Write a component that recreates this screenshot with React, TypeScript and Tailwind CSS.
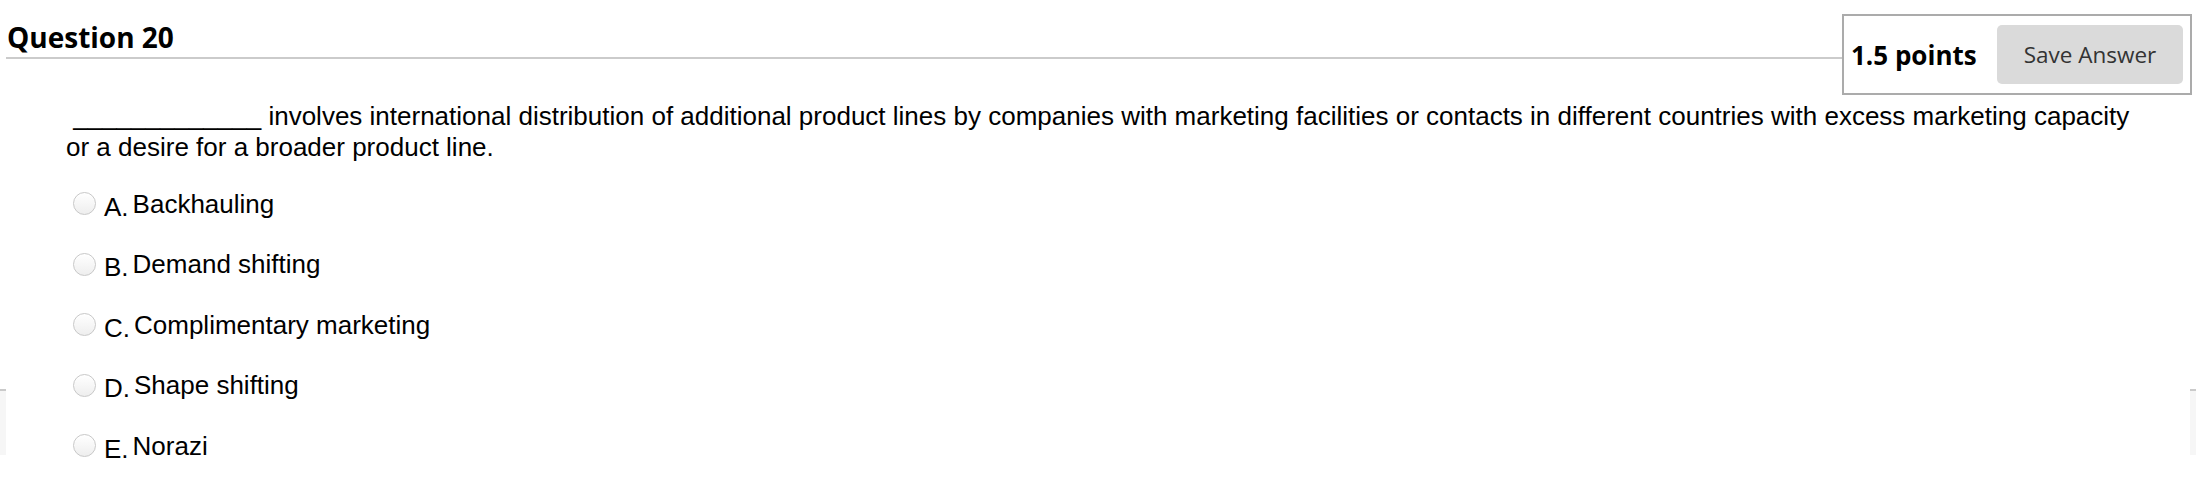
import React from 'react';

const options = [
  { key: 'A.', text: 'Backhauling' },
  { key: 'B.', text: 'Demand shifting' },
  { key: 'C.', text: 'Complimentary marketing' },
  { key: 'D.', text: 'Shape shifting' },
  { key: 'E.', text: 'Norazi' },
];

function Radio() {
  return (
    <span className="block h-[23px] w-[23px] shrink-0 rounded-full border border-[#c8c8c8] bg-gradient-to-b from-white to-[#eeeeee] shadow-[inset_0_1px_1px_rgba(255,255,255,0.9)]" />
  );
}

export default function App() {
  return (
    <div className="relative h-[482px] w-[2196px] overflow-hidden bg-white">
      {/* panel edges peeking out behind the question */}
      <div className="absolute left-0 top-[389px] h-[66px] w-[6px] border-t-2 border-[#cacaca] bg-[#f6f6f6]" />
      <div className="absolute right-0 top-[389px] h-[66px] w-[6px] border-t-2 border-[#cacaca] bg-[#f6f6f6]" />

      {/* Header */}
      <div className="relative flex items-start pl-[6px] pr-[4px] pt-[14px]">
        <div className="h-[45px] flex-1 border-b-2 border-[#cbcbcb]">
          <h2 className="mt-[4px] pl-[1px] font-['Open_Sans',sans-serif] text-[28px] font-bold leading-[38px] text-black">
            Question 20
          </h2>
        </div>
        <div className="flex h-[81px] w-[350px] items-center border-2 border-[#ababab] bg-white pl-[7px] pr-[7px]">
          <span className="font-['Open_Sans',sans-serif] text-[26px] font-bold leading-none text-black">
            1.5 points
          </span>
          <button className="ml-auto flex h-[59px] w-[186px] items-center justify-center rounded-[5px] bg-[#dadada] font-['Open_Sans',sans-serif] text-[22.5px] text-[#333]">
            Save Answer
          </button>
        </div>
      </div>

      {/* Body */}
      <div className="relative pl-[66px] font-['Liberation_Sans',Arial,sans-serif] text-black">
        <p className="mt-[5.5px] w-[2075px] text-[26px] leading-[31px]">
          {'\u00a0_____________ involves international distribution of additional product lines by companies with marketing facilities or contacts in different countries with excess marketing capacity or a desire for a broader product line.'}
        </p>

        <div className="mt-[26px] flex flex-col gap-[30.5px] pl-[7px]">
          {options.map((o) => (
            <div key={o.key} className="flex h-[30px] items-center text-[26px] leading-[30px]">
              <Radio />
              <span className="ml-[8px] translate-y-[3px]">{o.key}</span>
              <span className="ml-[4px]">{o.text}</span>
            </div>
          ))}
        </div>
      </div>
    </div>
  );
}
